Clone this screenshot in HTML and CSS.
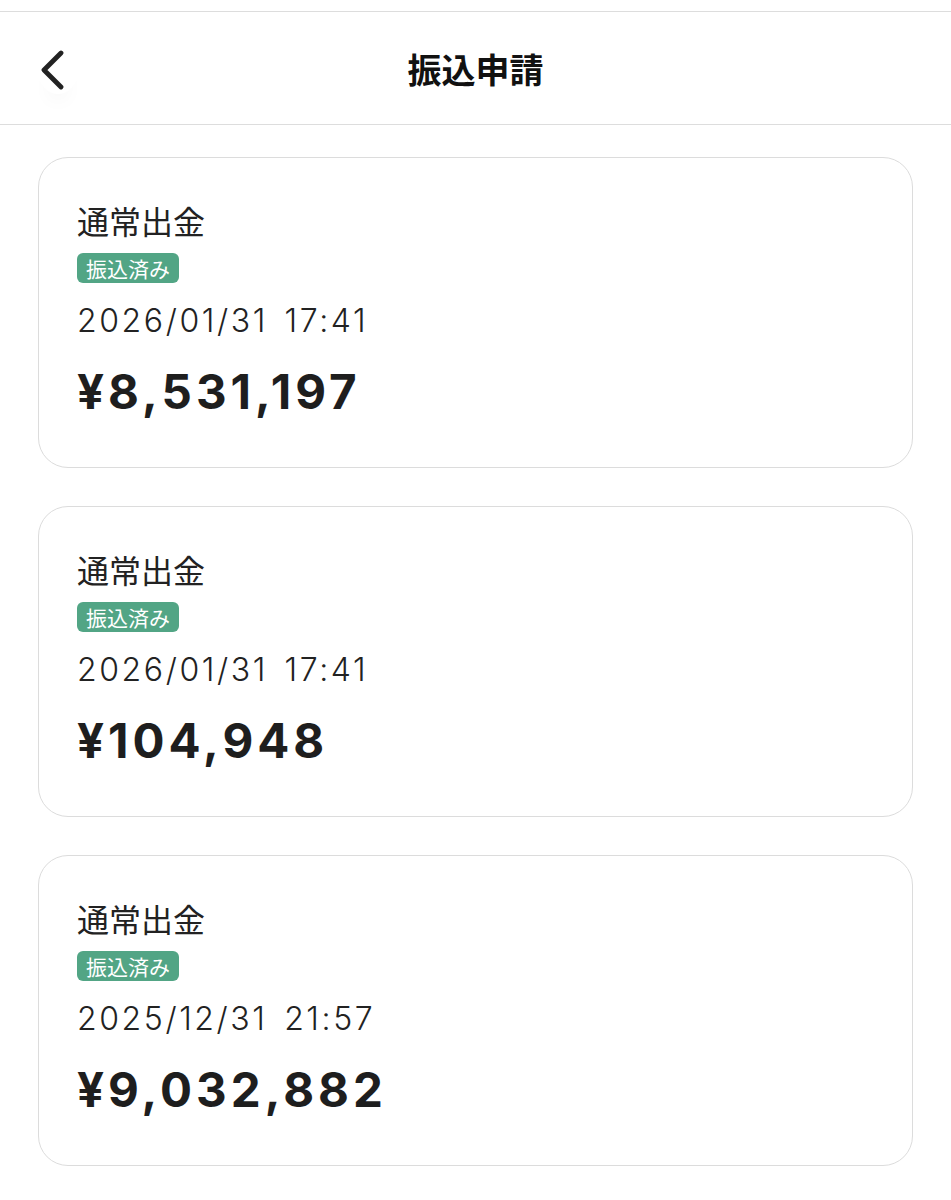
FILE: index.html
```html
<!DOCTYPE html>
<html lang="ja">
<head>
<meta charset="utf-8">
<title>振込申請</title>
<link rel="stylesheet" href="styles.css">
</head>
<body>
<div class="topline"></div>
<header class="header">
  <button class="back" aria-label="戻る">
    <svg width="30" height="40" viewBox="0 0 30 40"><path d="M23 3 L6 20 L23 37" fill="none" stroke="#222" stroke-width="4.8" stroke-linecap="round" stroke-linejoin="round"/></svg>
  </button>
  <h1 class="title">振込申請</h1>
</header>
<main class="list">
  <section class="card">
    <div class="kind">通常出金</div>
    <span class="badge">振込済み</span>
    <div class="date">2026/01/31 17:41</div>
    <div class="amount">¥8,531,197</div>
  </section>
  <section class="card">
    <div class="kind">通常出金</div>
    <span class="badge">振込済み</span>
    <div class="date">2026/01/31 17:41</div>
    <div class="amount">¥104,948</div>
  </section>
  <section class="card">
    <div class="kind">通常出金</div>
    <span class="badge">振込済み</span>
    <div class="date">2025/12/31 21:57</div>
    <div class="amount">¥9,032,882</div>
  </section>
</main>
</body>
</html>
```
FILE: styles.css
```css
* { box-sizing: border-box; }
html, body { margin: 0; padding: 0; background: #fff; }
body {
  font-family: "Noto Sans CJK JP", "Noto Sans", sans-serif;
  color: #222;
}
.topline { height: 12px; border-bottom: 1px solid #ddd; }
.header {
  position: relative;
  height: 113px;
  border-bottom: 1px solid #ddd;
  display: flex;
  align-items: center;
  justify-content: center;
}
.back {
  position: absolute;
  left: 38px;
  top: 34px;
  width: 40px;
  height: 48px;
  padding: 0;
  border: 0;
  background: transparent;
  border-radius: 50%;
  box-shadow: 0 18px 20px -12px rgba(0,0,0,0.05);
  display: flex;
  align-items: center;
}
.title {
  margin: 0;
  font-size: 34px;
  font-weight: 700;
  color: #111;
}
.list {
  padding: 32px 38px 0 38px;
  display: flex;
  flex-direction: column;
  gap: 38px;
}
.card {
  height: 311px;
  border: 1.5px solid #dcdcdc;
  border-radius: 30px;
  padding: 40px 38px 0 38px;
  display: flex;
  flex-direction: column;
  align-items: flex-start;
}
.kind {
  font-size: 32px;
  line-height: 44px;
  font-weight: 400;
  color: #222;
}
.badge {
  margin-top: 11px;
  background: #52a585;
  color: #fff;
  font-size: 21px;
  line-height: 30px;
  height: 30px;
  padding: 0 9px;
  border-radius: 6px;
}
.date {
  margin-top: 18px;
  font-family: "Inter", "Noto Sans CJK JP", sans-serif;
  font-size: 32px;
  line-height: 40px;
  font-weight: 300;
  letter-spacing: 2.6px;
  word-spacing: 5px;
  color: #222;
}
.amount {
  margin-top: 23px;
  font-family: "Inter", "Noto Sans CJK JP", sans-serif;
  font-size: 47.5px;
  line-height: 56px;
  font-weight: 700;
  letter-spacing: 4px;
  color: #1e1e1e;
}
```
